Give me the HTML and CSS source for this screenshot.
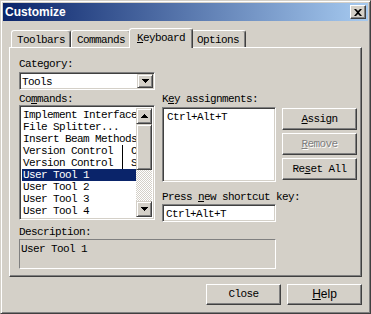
FILE: index.html
```html
<!DOCTYPE html>
<html lang="en">
<head>
  <meta charset="UTF-8">
  <title>Customize</title>
  <link rel="stylesheet" href="styles.css">
</head>
<body>

<div class="window">
  <div class="titlebar">
    <span class="title">Customize</span>
    <button class="close-btn" type="button">
      <svg width="8" height="7" viewBox="0 0 8 7"><path d="M0 0h2l2 2 2-2h2L5 3.5 8 7H6L4 5 2 7H0l3-3.5z"/></svg>
    </button>
  </div>

  <div class="tabs">
    <div class="tab">Toolbars</div>
    <div class="tab">Commands</div>
    <div class="tab active"><u>K</u>eyboard</div>
    <div class="tab tab-options">Options</div>
  </div>

  <div class="panel">
    <label class="lbl">Category:</label>
    <div class="combo">
      <span class="combo-text">Tools</span>
      <span class="sb-btn combo-btn">
        <svg width="7" height="4" viewBox="0 0 7 4"><path d="M0 0H7V1H6V2H5V3H4V4H3V3H2V2H1V1H0Z"/></svg>
      </span>
    </div>

    <div class="middle">
      <div class="col-left">
        <label class="lbl">Co<u>m</u>mands:</label>
        <div class="listbox">
          <ul class="items">
            <li>Implement Interface</li>
            <li>File Splitter...</li>
            <li>Insert Beam Methods</li>
            <li>Version Control<span class="sep">C</span></li>
            <li>Version Control<span class="sep">S</span></li>
            <li class="sel">User Tool 1</li>
            <li>User Tool 2</li>
            <li>User Tool 3</li>
            <li>User Tool 4</li>
            <li>User Tool 5</li>
          </ul>
          <div class="scrollbar">
            <span class="sb-btn">
              <svg width="7" height="4" viewBox="0 0 7 4"><path d="M3 0H4V1H5V2H6V3H7V4H0V3H1V2H2V1H3Z"/></svg>
            </span>
            <span class="sb-thumb"></span>
            <span class="sb-track"></span>
            <span class="sb-btn">
              <svg width="7" height="4" viewBox="0 0 7 4"><path d="M0 0H7V1H6V2H5V3H4V4H3V3H2V2H1V1H0Z"/></svg>
            </span>
          </div>
        </div>
      </div>

      <div class="col-right">
        <label class="lbl">K<u>e</u>y assignments:</label>
        <div class="assign-row">
          <div class="keylist">Ctrl+Alt+T</div>
          <div class="btn-col">
            <button class="btn side-btn" type="button"><u>A</u>ssign</button>
            <button class="btn side-btn disabled" type="button"><u>R</u>emove</button>
            <button class="btn side-btn" type="button">Re<u>s</u>et All</button>
          </div>
        </div>
        <label class="lbl lbl-press">Press <u>n</u>ew shortcut key:</label>
        <div class="field">Ctrl+Alt+T</div>
      </div>
    </div>

    <label class="lbl lbl-desc">Description:</label>
    <div class="desc">User Tool 1</div>
  </div>

  <div class="footer">
    <button class="btn" type="button">Close</button>
    <button class="btn btn-help" type="button"><u>H</u>elp</button>
  </div>
</div>

</body>
</html>
```

FILE: styles.css
```css
body {
  margin: 0;
  background-color: #d4d0c8;
  font-family: 'Liberation Mono', 'DejaVu Sans Mono', monospace;
  font-size: 11px;
  letter-spacing: -0.6px;
  color: #000;
}

.window {
  width: 371px;
  height: 314px;
  box-sizing: border-box;
  padding: 2px;
  background-color: #d4d0c8;
  border: 1px solid;
  border-color: #d4d0c8 #404040 #404040 #d4d0c8;
  box-shadow: inset 1px 1px #fff, inset -1px -1px #808080;
}

.titlebar {
  height: 18px;
  display: flex;
  align-items: center;
  justify-content: space-between;
  padding: 0 2px;
  background: linear-gradient(to right, #0a246a, #a6caf0);
}

.title {
  font-family: 'Liberation Sans', Arial, sans-serif;
  font-weight: bold;
  font-size: 12px;
  letter-spacing: 0;
  line-height: 18px;
  color: #fff;
}

.close-btn {
  width: 16px;
  height: 14px;
  box-sizing: border-box;
  padding: 0;
  display: flex;
  align-items: center;
  justify-content: center;
  background-color: #d4d0c8;
  border: 1px solid;
  border-color: #fff #404040 #404040 #fff;
  box-shadow: inset -1px -1px #808080;
}

/* tabs */
.tabs {
  display: flex;
  align-items: flex-end;
  height: 19px;
  margin: 7px 0 0 6px;
  padding-left: 2px;
}

.tab {
  box-sizing: border-box;
  width: 60px;
  height: 17px;
  padding: 3px 0 0 5px;
  line-height: 12px;
  border: 1px solid;
  border-bottom: 0;
  border-color: #fff #404040 #fff #fff;
  border-radius: 3px 3px 0 0;
  box-shadow: inset -1px 0 #808080;
}

.tab.active {
  width: 64px;
  height: 20px;
  margin: 0 -2px -1px;
  padding-left: 7px;
  position: relative;
  z-index: 1;
  background-color: #d4d0c8;
}

.tab-options {
  width: 55px;
}

.panel {
  box-sizing: border-box;
  width: 353px;
  height: 230px;
  margin-left: 6px;
  padding: 10px 0 0 9px;
  border: 1px solid;
  border-color: #fff #404040 #404040 #fff;
  box-shadow: inset -1px -1px #808080;
}

.lbl {
  display: block;
  height: 12px;
  line-height: 12px;
  white-space: nowrap;
}

/* sunken fields */
.combo,
.listbox,
.keylist,
.field {
  box-sizing: border-box;
  background-color: #fff;
  border: 1px solid;
  border-color: #808080 #fff #fff #808080;
  box-shadow: inset 1px 1px #404040, inset -1px -1px #d4d0c8;
}

.combo {
  display: flex;
  justify-content: space-between;
  width: 136px;
  height: 18px;
  margin-top: 2px;
  padding: 1px;
}

.combo-text {
  padding: 2px 0 0 1px;
  line-height: 12px;
}

.sb-btn,
.sb-thumb {
  box-sizing: border-box;
  display: flex;
  align-items: center;
  justify-content: center;
  background-color: #d4d0c8;
  border: 1px solid;
  border-color: #d4d0c8 #404040 #404040 #d4d0c8;
  box-shadow: inset 1px 1px #fff, inset -1px -1px #808080;
}

.sb-btn {
  height: 16px;
}

.combo-btn {
  width: 16px;
  height: 14px;
}

.middle {
  display: flex;
  gap: 7px;
  height: 129px;
  margin-top: 3px;
}

.col-left {
  width: 136px;
}

.col-right {
  width: 195px;
}

.listbox {
  display: flex;
  width: 136px;
  height: 115px;
  padding: 2px;
}

.items {
  flex: 1;
  list-style: none;
  margin: 0;
  padding: 1px 0 0;
  overflow: hidden;
}

.items li {
  height: 12px;
  line-height: 12px;
  padding-left: 1px;
  white-space: nowrap;
  overflow: hidden;
}

.items li.sel {
  background-color: #0a246a;
  color: #fff;
}

.sep {
  display: inline-block;
  height: 12px;
  vertical-align: top;
  margin-left: 9px;
  padding-left: 8px;
  border-left: 1px solid #000;
}

.scrollbar {
  width: 16px;
  display: flex;
  flex-direction: column;
}

.sb-thumb {
  height: 46px;
}

.sb-track {
  flex: 1;
  background-image:
    linear-gradient(45deg, #fff 25%, transparent 25%, transparent 75%, #fff 75%),
    linear-gradient(45deg, #fff 25%, transparent 25%, transparent 75%, #fff 75%);
  background-size: 2px 2px;
  background-position: 0 0, 1px 1px;
  background-color: #d4d0c8;
  image-rendering: pixelated;
}

.assign-row {
  display: flex;
  align-items: flex-start;
  gap: 6px;
}

.keylist {
  width: 114px;
  height: 75px;
  margin-top: 2px;
  padding: 3px 0 0 4px;
  line-height: 12px;
}

.btn-col {
  display: flex;
  flex-direction: column;
  gap: 3px;
  margin-top: 3px;
}

.btn {
  box-sizing: border-box;
  width: 75px;
  height: 21px;
  padding: 0;
  background-color: #d4d0c8;
  border: 1px solid;
  border-color: #fff #404040 #404040 #fff;
  box-shadow: inset -1px -1px #808080;
  font-family: inherit;
  font-size: 11px;
  letter-spacing: inherit;
  line-height: 19px;
  text-align: center;
  color: #000;
}

.side-btn {
  height: 22px;
  line-height: 20px;
}

.btn.disabled {
  color: #808080;
  text-shadow: 1px 1px #fff;
}

.lbl-press {
  margin-top: 9px;
}

.field {
  width: 114px;
  height: 18px;
  margin-top: 1px;
  padding: 3px 0 0 3px;
  line-height: 12px;
}

.lbl-desc {
  margin-top: 4px;
}

.desc {
  box-sizing: border-box;
  width: 257px;
  height: 30px;
  margin-top: 1px;
  padding: 3px 0 0 1px;
  line-height: 12px;
  border: 1px solid;
  border-color: #808080 #fff #fff #808080;
}

.footer {
  display: flex;
  justify-content: flex-end;
  gap: 6px;
  width: 353px;
  margin: 7px 0 0 6px;
}

.btn-help {
  font-family: 'Liberation Sans', Arial, sans-serif;
  font-size: 12px;
  letter-spacing: 0;
}
```
